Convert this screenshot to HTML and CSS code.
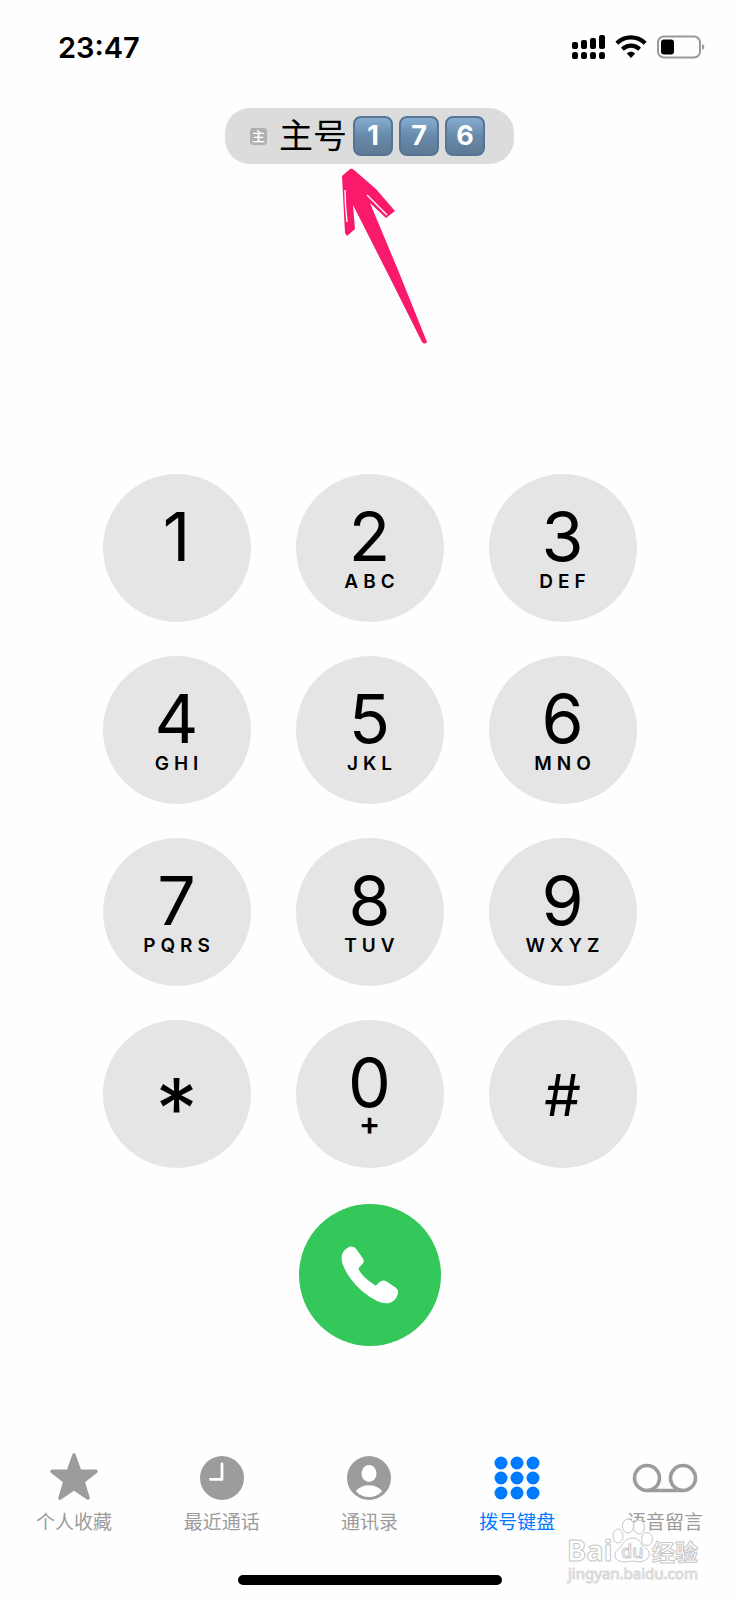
FILE: index.html
```html
<!DOCTYPE html>
<html lang="zh-CN">
<head>
<meta charset="utf-8">
<meta name="viewport" content="width=device-width, initial-scale=1">
<title>拨号键盘</title>
<link rel="stylesheet" href="styles.css">
</head>
<body>
<div class="phone">
  <header class="status">
    <time class="clock">23:47</time>
    <div class="indicators">
      <svg class="signal" width="33" height="24" viewBox="0 0 33 24" aria-hidden="true">
        <rect x="0" y="7" width="6" height="7" rx="2"/><rect x="9" y="5" width="6" height="9" rx="2"/><rect x="18" y="3" width="6" height="11" rx="2"/><rect x="27" y="0" width="6" height="14" rx="2"/>
        <rect x="0" y="17" width="6" height="7" rx="2.6"/><rect x="9" y="17" width="6" height="7" rx="2.6"/><rect x="18" y="17" width="6" height="7" rx="2.6"/><rect x="27" y="17" width="6" height="7" rx="2.6"/>
      </svg>
      <svg class="wifi" width="32" height="24" viewBox="0 0 32 24" aria-hidden="true">
        <path d="M1.8 8.2C10 .4 22 .4 30.2 8.2M7.4 14.2C12.6 9.4 19.4 9.4 24.6 14.2" fill="none" stroke="#000" stroke-width="4.2"/>
        <path d="M11.8 18.4C14.4 16.2 17.6 16.2 20.2 18.4L16 23Z"/>
      </svg>
      <svg class="battery" width="48" height="24" viewBox="0 0 48 24" aria-hidden="true">
        <rect x="1" y="1.5" width="42" height="21" rx="6" fill="none" stroke="#999" stroke-width="2"/>
        <rect x="4" y="4.5" width="13" height="15" rx="3"/>
        <path d="M45 9C48 10 48 14 45 15Z" fill="#999"/>
      </svg>
    </div>
  </header>

  <main class="dialer">
    <div class="line">
      <button class="line-button" type="button">
        <span class="sim">主</span>
        <span class="line-name">主号</span>
        <span class="keycaps"><span class="keycap">1</span><span class="keycap">7</span><span class="keycap">6</span></span>
      </button>
      <svg class="arrow" width="86" height="178" viewBox="0 0 86 178" aria-hidden="true">
        <path fill="#fa1a6b" d="M0 8L8 1Q10 0 12 2L34 21L53 43L44 50L28 35L56 102L85 174Q83 177 80 174L46 106L11 37L13 61L5 68L3 65Z"/>
        <path d="M3 22L3.500 38L5 54M25 27L35 37L45 47" fill="none" stroke="#fff" stroke-width="1.400"/>
      </svg>
    </div>

    <div class="keypad">
      <button class="key" type="button"><span class="digit">1</span></button>
      <button class="key" type="button"><span class="digit">2</span><span class="letters">ABC</span></button>
      <button class="key" type="button"><span class="digit">3</span><span class="letters">DEF</span></button>
      <button class="key" type="button"><span class="digit">4</span><span class="letters">GHI</span></button>
      <button class="key" type="button"><span class="digit">5</span><span class="letters">JKL</span></button>
      <button class="key" type="button"><span class="digit">6</span><span class="letters">MNO</span></button>
      <button class="key" type="button"><span class="digit">7</span><span class="letters">PQRS</span></button>
      <button class="key" type="button"><span class="digit">8</span><span class="letters">TUV</span></button>
      <button class="key" type="button"><span class="digit">9</span><span class="letters">WXYZ</span></button>
      <button class="key key-symbol" type="button"><span class="star">*</span></button>
      <button class="key" type="button"><span class="digit">0</span><span class="plus">+</span></button>
      <button class="key key-symbol" type="button"><span class="hash">#</span></button>
    </div>

    <button class="call" type="button" aria-label="呼叫">
      <svg width="58" height="58" viewBox="0 0 58 58" aria-hidden="true">
        <path fill="#fff" d="M8.500 .8Q12.500 -.4 15 2.800L21.800 12.200Q23.800 15.200 21.600 17.800L17.800 22Q17.200 22.800 17.800 23.800Q22 31.500 34 39.300Q34.800 39.700 35.500 39L38.500 36Q42 33.200 45.500 35.400L54.500 41.400Q58.200 44.200 56.700 48.500Q54.500 55.500 47.500 57.200Q42.500 58 36 55Q20 47 9.500 32.500Q1 20.500 .5 12.500Q.6 4.500 8.500 .8Z"/>
      </svg>
    </button>
  </main>

  <footer class="footer">
    <nav class="tabs">
      <a class="tab" href="#favorites">
        <svg width="50" height="50" viewBox="0 0 50 50" aria-hidden="true"><path d="M25 3L30.600 19L47 19.300L34 29.500L39 46L25 36.500L11 46L16 29.500L3 19.300L19.400 19Z" fill="currentColor" stroke="currentColor" stroke-width="3.600" stroke-linejoin="round"/></svg>
        <span>个人收藏</span>
      </a>
      <a class="tab" href="#recents">
        <svg width="50" height="50" viewBox="0 0 50 50" aria-hidden="true"><circle cx="25" cy="26" r="22" fill="currentColor"/><path d="M25 12V27.400H13.500" fill="none" stroke="#fff" stroke-width="2.800" stroke-linecap="round" stroke-linejoin="round"/></svg>
        <span>最近通话</span>
      </a>
      <a class="tab" href="#contacts">
        <svg width="50" height="50" viewBox="0 0 50 50" aria-hidden="true"><circle cx="25" cy="26" r="22" fill="currentColor"/><ellipse cx="25" cy="21.500" rx="7.500" ry="8.500" fill="#fff"/><path d="M11.800 39Q17 33.300 25 33.300Q33 33.300 38.200 39Q33 45 25 45Q17 45 11.800 39Z" fill="#fff"/></svg>
        <span>通讯录</span>
      </a>
      <a class="tab tab-active" href="#keypad" aria-current="page">
        <svg width="50" height="50" viewBox="0 0 50 50" aria-hidden="true"><g fill="currentColor"><circle cx="9" cy="11" r="6.500"/><circle cx="25" cy="11" r="6.500"/><circle cx="41" cy="11" r="6.500"/><circle cx="9" cy="26" r="6.500"/><circle cx="25" cy="26" r="6.500"/><circle cx="41" cy="26" r="6.500"/><circle cx="9" cy="41" r="6.500"/><circle cx="25" cy="41" r="6.500"/><circle cx="41" cy="41" r="6.500"/></g></svg>
        <span>拨号键盘</span>
      </a>
      <a class="tab" href="#voicemail">
        <svg width="66" height="50" viewBox="0 0 66 50" aria-hidden="true"><g fill="none" stroke="currentColor" stroke-width="3.600"><circle cx="15" cy="26" r="12.500"/><circle cx="51" cy="26" r="12.500"/><path d="M15 38.500H51"/></g></svg>
        <span>语音留言</span>
      </a>
    </nav>
    <div class="home-bar"></div>
    <svg class="watermark" width="150" height="72" viewBox="0 0 150 72" role="img" aria-label="Baidu 经验">
      <g class="mark-shape">
        <ellipse cx="58" cy="18" rx="5" ry="7"/><ellipse cx="68" cy="8" rx="5.500" ry="7"/><ellipse cx="79" cy="9" rx="5.500" ry="7"/><ellipse cx="87" cy="21" rx="5.500" ry="6.500"/>
        <path d="M72 20Q79 20 82 27Q91 33 89 38Q86 46 72 43Q58 46 55 39Q54 33 61 29Q65 20 72 20Z"/>
      </g>
      <text class="mark-name" x="7" y="43">Bai</text>
      <text class="mark-du" x="61" y="40">du</text>
      <text class="mark-cjk" x="92" y="43">经验</text>
      <text class="mark-url" x="8" y="61">jingyan.baidu.com</text>
    </svg>
  </footer>
</div>
</body>
</html>
```
FILE: styles.css
```css
* { box-sizing: border-box; }

body {
  margin: 0;
  background: #fefefe;
  color: #000;
  font-family: Inter, "Noto Sans CJK SC", sans-serif;
}

button {
  border: 0;
  padding: 0;
  color: inherit;
  font: inherit;
  cursor: pointer;
}

.phone {
  display: flex;
  flex-direction: column;
  min-height: 100vh;
}

.status {
  display: flex;
  justify-content: space-between;
  align-items: flex-start;
  height: 108px;
  padding: 30px 34px 0 58px;
}

.clock {
  font-size: 29px;
  font-weight: 600;
  line-height: 35px;
}

.indicators {
  display: flex;
  gap: 10px;
  padding-top: 5px;
}

.dialer {
  display: flex;
  flex-direction: column;
  align-items: center;
}

.line {
  position: relative;
  margin-bottom: 310px;
}

.line-button {
  display: flex;
  align-items: center;
  height: 56px;
  padding: 0 29px 0 25px;
  border-radius: 25px;
  background: #dcdcdc;
}

.sim {
  width: 17px;
  height: 17px;
  margin-right: 12px;
  border-radius: 3px;
  background: #b0b0b4;
  color: #fff;
  font-size: 13px;
  font-weight: 500;
  line-height: 17px;
}

.line-name {
  margin-right: 6px;
  font-size: 34px;
  line-height: 56px;
}

.keycaps {
  display: flex;
  gap: 6px;
}

.keycap {
  width: 40px;
  height: 40px;
  border: 2px solid #567493;
  border-radius: 8px;
  background: linear-gradient(#86add0, #678aab 50%, #5f7a95);
  color: #fff;
  font-size: 27px;
  font-weight: 700;
  line-height: 36px;
  text-align: center;
}

.arrow {
  position: absolute;
  top: 60px;
  left: 117px;
}

.keypad {
  display: grid;
  grid-template-columns: repeat(3, 148px);
  gap: 34px 45px;
  margin-bottom: 36px;
}

.key {
  display: flex;
  flex-direction: column;
  align-items: center;
  height: 148px;
  padding-top: 26px;
  border-radius: 50%;
  background: #e5e5e5;
}

.key-symbol {
  justify-content: center;
  padding-top: 2px;
}

.digit {
  font-size: 68px;
  line-height: 72px;
}

.letters {
  padding-left: 5px;
  font-size: 19px;
  font-weight: 600;
  letter-spacing: 5px;
  line-height: 20px;
}

.plus {
  font-size: 32px;
  font-weight: 600;
  line-height: 12px;
}

.star {
  padding-top: 28px;
  font-size: 84px;
  line-height: 80px;
}

.hash {
  font-size: 58px;
  line-height: 70px;
}

.call {
  display: flex;
  align-items: center;
  justify-content: center;
  width: 142px;
  height: 142px;
  border-radius: 50%;
  background: #34c759;
}

.footer {
  position: relative;
  margin-top: auto;
  padding-bottom: 15px;
}

.tabs {
  display: grid;
  grid-template-columns: repeat(5, 1fr);
  margin-bottom: 38px;
}

.tab {
  display: flex;
  flex-direction: column;
  align-items: center;
  gap: 7px;
  color: #9c9c9c;
  font-size: 19px;
  line-height: 28px;
  text-decoration: none;
}

.tab-active { color: #007aff; }

.home-bar {
  width: 264px;
  height: 10px;
  margin: 0 auto;
  border-radius: 5px;
  background: #000;
}

.watermark {
  position: absolute;
  right: 29px;
  bottom: 10px;
}

.mark-shape,
.watermark text {
  fill: #fff;
  stroke: #c8c8c8;
  stroke-width: 1px;
}

.watermark text {
  font-family: "Noto Sans", "Noto Sans CJK SC", sans-serif;
  font-weight: 700;
}

.mark-name { font-size: 29px; }
.watermark .mark-du { font-size: 18px; font-weight: 500; }
.mark-cjk { font-size: 23px; }
.watermark .mark-url {
  fill: #f4f4f4;
  stroke: #d8d8d8;
  font-size: 15px;
  font-weight: 400;
}
```
